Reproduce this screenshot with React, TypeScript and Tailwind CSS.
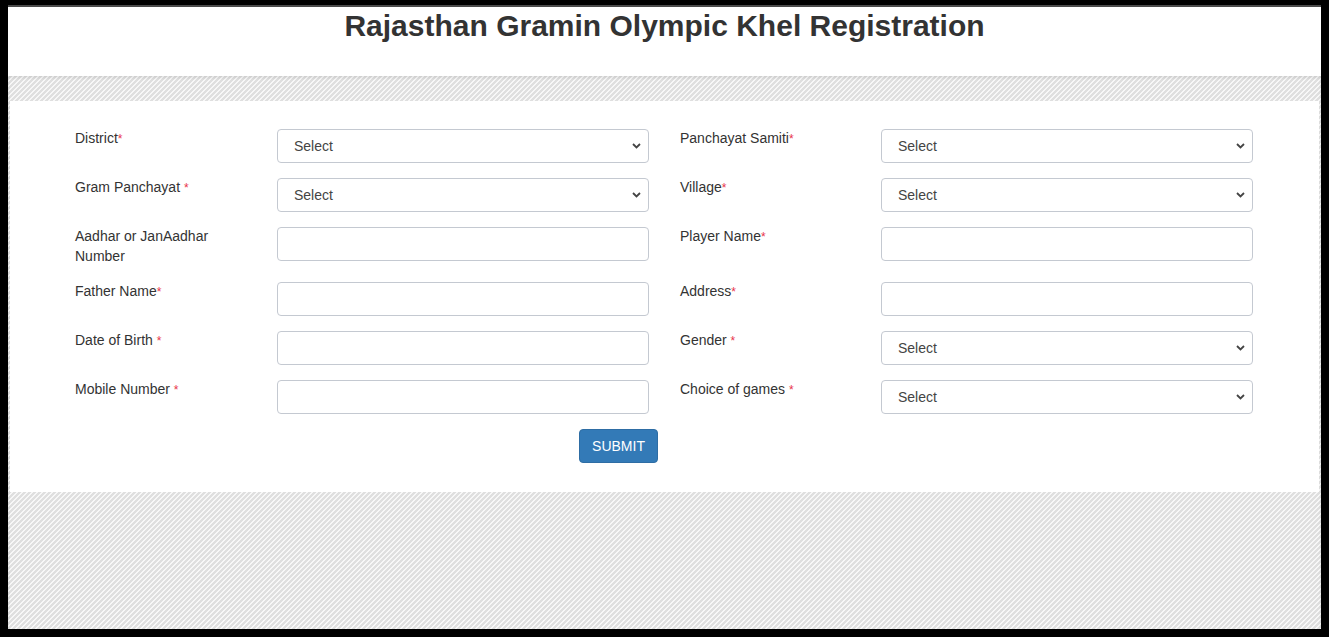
import React from "react";

const hatch =
  "bg-[linear-gradient(135deg,#f7f7f7_0%,#f7f7f7_16%,#dfdfdf_16%,#dfdfdf_50%,#f7f7f7_50%,#f7f7f7_66%,#dfdfdf_66%,#dfdfdf_100%)] bg-[length:5px_5px]";

type Field = { label: string; star?: "" | " "; kind: "select" | "input" };

const rows: [Field, Field][] = [
  [
    { label: "District", star: "", kind: "select" },
    { label: "Panchayat Samiti", star: "", kind: "select" },
  ],
  [
    { label: "Gram Panchayat", star: " ", kind: "select" },
    { label: "Village", star: "", kind: "select" },
  ],
  [
    { label: "Aadhar or JanAadhar Number", kind: "input" },
    { label: "Player Name", star: "", kind: "input" },
  ],
  [
    { label: "Father Name", star: "", kind: "input" },
    { label: "Address", star: "", kind: "input" },
  ],
  [
    { label: "Date of Birth", star: " ", kind: "input" },
    { label: "Gender", star: " ", kind: "select" },
  ],
  [
    { label: "Mobile Number", star: " ", kind: "input" },
    { label: "Choice of games", star: " ", kind: "select" },
  ],
];

const SelectBox = () => (
  <div className="relative h-[34px] w-[372px]">
    <select className="h-full w-full appearance-none rounded-[4px] border border-[#c4c9d1] bg-white pl-[16px] text-[14px] text-[#444] outline-none">
      <option>Select</option>
    </select>
    <svg
      className="pointer-events-none absolute right-[8px] top-[14px]"
      width="9"
      height="6"
      viewBox="0 0 9 6"
    >
      <path d="M1 1l3.5 3.5L8 1" fill="none" stroke="#444" strokeWidth="1.8" />
    </svg>
  </div>
);

const TextBox = () => (
  <input
    type="text"
    className="h-[34px] w-[372px] rounded-[4px] border border-[#c4c9d1] bg-white px-[12px] text-[14px] text-[#555] outline-none"
  />
);

const FormCell = ({ f, right }: { f: Field; right?: boolean }) => (
  <div className="flex items-start">
    <label
      className={`-mt-px mb-px pr-[30px] text-[14px] leading-[20px] text-[#333] ${
        right ? "w-[201px]" : "w-[202px]"
      }`}
    >
      {f.label}
      {f.star !== undefined && (
        <>
          {f.star}
          <span className="text-[12px] text-[#e8334a]">*</span>
        </>
      )}
    </label>
    {f.kind === "select" ? <SelectBox /> : <TextBox />}
  </div>
);

export default function App() {
  return (
    <div
      className="flex h-[637px] w-[1329px] flex-col bg-black pb-[8px] pl-[8px] pr-[8px] pt-[5px]"
      style={{ fontFamily: '"Liberation Sans", Arial, sans-serif' }}
    >
      <div className="flex flex-1 flex-col border-t-2 border-[#4a4a4a]">
        <header className="h-[69px] bg-white pt-[2px] text-center">
          <h1 className="text-[30px] font-bold leading-[33px] text-[#333]">
            Rajasthan Gramin Olympic Khel Registration
          </h1>
        </header>

        <div className={`flex flex-1 flex-col px-[2px] pt-[25px] shadow-[inset_0_2px_3px_rgba(0,0,0,0.08)] ${hatch}`}>
          <form className="h-[391px] bg-white pl-[65px] pt-[28px]">
            <div className="flex flex-col gap-[15px]">
              {rows.map(([a, b], i) => (
                <div key={i} className="flex gap-[31px]">
                  <FormCell f={a} />
                  <FormCell f={b} right />
                </div>
              ))}
            </div>
            <div className="mt-[15px] pl-[504px]">
              <button
                type="button"
                className="h-[34px] w-[79px] rounded-[4px] border border-[#2e6da4] bg-[#337ab7] text-[14px] text-white"
              >
                SUBMIT
              </button>
            </div>
          </form>
        </div>
      </div>
    </div>
  );
}
